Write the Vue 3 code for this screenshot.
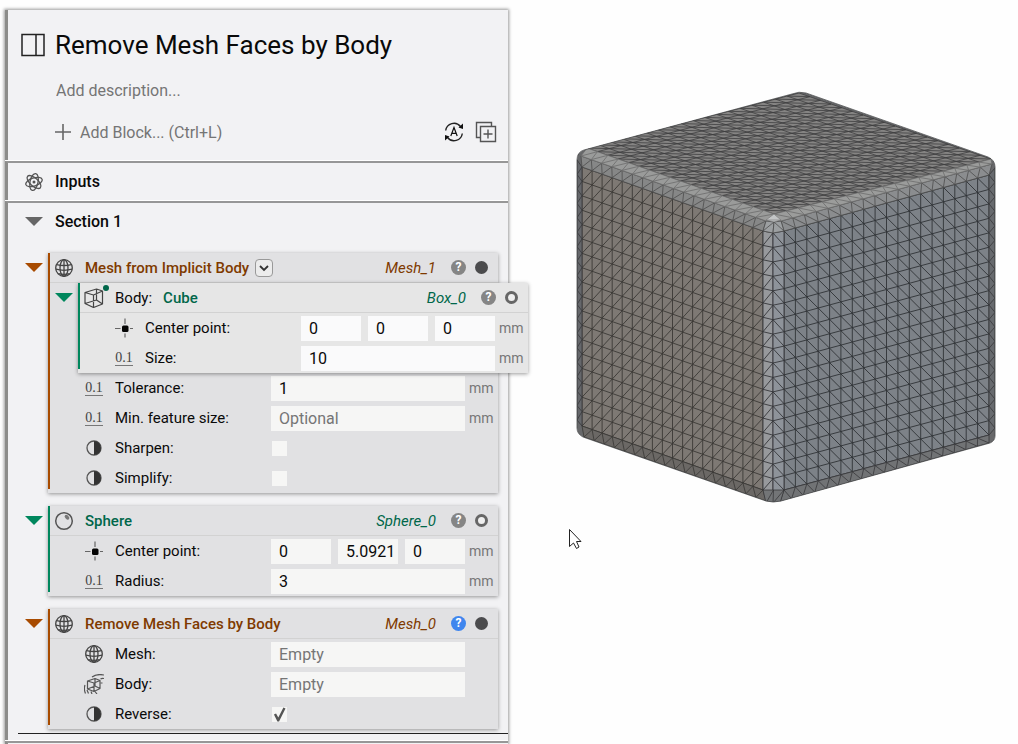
<template>
  <div class="page">

    <!-- ICONS -->
    <svg class="sprite" aria-hidden="true">
      <symbol id="globe" viewBox="0 0 20 20">
        <g fill="none" stroke="#444" stroke-width="1.3">
          <circle cx="10" cy="10" r="8.3" />
          <ellipse cx="10" cy="10" rx="4" ry="8.3" />
          <path d="M10 1.7v16.6M2.7 6.6Q10 8.4 17.3 6.6M1.8 11.2Q10 13.4 18.2 11.2M4.3 15.6Q10 17 15.7 15.6" />
        </g>
      </symbol>
      <symbol id="box" viewBox="0 0 20 20">
        <g fill="none" stroke="#444" stroke-width="1.2" stroke-linejoin="round">
          <path d="M1 4.500 12.500 1l6 2v13l-9 3.500L1 15.500zM1 4.500l8.500 2.500 9-4M9.500 7v12.500M12.500 1v11l6 4M12.500 12 1 15.500" />
        </g>
      </symbol>
      <symbol id="field" viewBox="0 0 20 20">
        <g fill="none" stroke="#555" stroke-width="1.2" stroke-linejoin="round">
          <path d="M3.500 7 11 4.500l5 2v8L10 17.500 3.500 15zM3.500 7 10 9l6-2.500M10 9v8.500M11 4.500V12l5 2.500M11 12l-7.500 3" />
          <path d="M8 3Q13-.5 20 1M1 11Q-.5 15 1.500 19.500M3 16l1.500 3.500M7 17.500l1 2.500M11 17.500l2 2.500M16.500 5Q18 4 20 4.500M16.500 9h2" />
        </g>
      </symbol>
      <symbol id="point" viewBox="0 0 20 20">
        <path d="M1 10.500h18M11 .5v19" stroke="#666" stroke-width="1.2" />
        <rect x="6.500" y="6" width="9.500" height="9.500" fill="#e2e2e3" />
        <rect x="8" y="7.500" width="6.500" height="6.500" rx="1.500" fill="#050505" />
      </symbol>
      <symbol id="half" viewBox="0 0 20 20">
        <circle cx="10" cy="10" r="7" fill="none" stroke="#555" stroke-width="1.300" />
        <path d="M10 3a7 7 0 0 1 0 14z" fill="#333" />
      </symbol>
      <symbol id="sphere" viewBox="0 0 20 20">
        <circle cx="10" cy="10" r="8.300" fill="none" stroke="#555" stroke-width="1.500" />
        <ellipse cx="13" cy="6.200" rx="1.800" ry="2.800" transform="rotate(-45 13 6.200)" fill="#777" />
      </symbol>
      <symbol id="atom" viewBox="0 0 20 20">
        <g fill="none" stroke="#555" stroke-width="1.300">
          <ellipse cx="10" cy="10" rx="4" ry="8.600" transform="rotate(12 10 10)" />
          <ellipse cx="10" cy="10" rx="4" ry="8.600" transform="rotate(72 10 10)" />
          <ellipse cx="10" cy="10" rx="4" ry="8.600" transform="rotate(132 10 10)" />
        </g>
        <circle cx="10" cy="10" r="1.500" fill="#555" />
      </symbol>
    </svg>

    <!-- NOTEBOOK -->
    <main class="panel">

      <section class="part intro">
        <div class="title">
          <svg width="24" height="24" viewBox="0 0 24 24" aria-hidden="true">
            <path d="M1 1.500h22v21H1zM15 1.500v21" fill="none" stroke="#222" stroke-width="1.500" />
          </svg>
          <h1>Remove Mesh Faces by Body</h1>
        </div>

        <input class="description" type="text" placeholder="Add description..." aria-label="Description">

        <div class="tools">
          <button class="add">
            <svg width="16" height="16" viewBox="0 0 16 16" aria-hidden="true">
              <path d="M8 0v16M0 8h16" stroke="#666" stroke-width="1.600" />
            </svg>
            Add Block... (Ctrl+L)
          </button>

          <button class="tool" aria-label="Auto run">
            <svg width="20" height="20" viewBox="0 0 20 20">
              <path d="M1.700 8.500A8.300 8.300 0 0 1 16.500 4.500M18.300 11.500A8.300 8.300 0 0 1 3.500 15.500" fill="none" stroke="#222" stroke-width="1.400" />
              <path d="M14.500 5.500 19 1.500v5.500zM5.500 14.500 1 18.500v-5.500z" fill="#111" />
              <path d="M6.800 14 10 5.500l3.200 8.500M8 11.300h4" fill="none" stroke="#111" stroke-width="1.200" />
            </svg>
          </button>
          <button class="tool" aria-label="Duplicate">
            <svg width="22" height="22" viewBox="0 0 22 22">
              <path d="M5.500 16.500H1.500V1.500h15v4M5.500 5.500h15v15h-15zM13 8.500v9M8.500 13h9" fill="none" stroke="#555" stroke-width="1.400" />
            </svg>
          </button>
        </div>
      </section>

      <section class="part bar">
        <svg class="icon"><use href="#atom" /></svg>
        <h2>Inputs</h2>
      </section>

      <section class="part">
        <div class="section-head">
          <button class="toggle grey" aria-label="Collapse section"></button>
          <h2>Section 1</h2>
        </div>

        <div class="blocks">
          <article v-for="block in blocks" :key="block.id" :class="['block', block.color]">
            <div
              v-for="(group, g) in block.groups"
              :key="g"
              :class="{ nested: group.nested, green: group.nested }"
            >

              <header v-if="group.head" class="head">
                <button class="toggle" :aria-label="'Collapse ' + group.head.name"></button>
                <span class="holder">
                  <svg class="icon"><use :href="'#' + group.head.icon" /></svg>
                  <i v-if="group.nested" class="dot"></i>
                </span>
                <span v-if="group.head.label" class="prefix">{{ group.head.label }}</span>
                <h3>{{ group.head.name }}</h3>
                <button v-if="group.head.overload" class="overload" aria-label="Choose overload">
                  <svg width="16" height="16" viewBox="0 0 16 16">
                    <path d="M4 6l4 4 4-4" fill="none" stroke="#333" stroke-width="1.800" />
                  </svg>
                </button>
                <em>{{ group.head.output }}</em>
                <button :class="['help', { blue: group.head.helpActive }]" aria-label="Help">?</button>
                <span :class="['state', { hollow: group.head.hollow }]"></span>
              </header>

              <div v-for="row in group.rows" :key="row.id" class="row">
                <span v-if="row.icon === 'number'" class="number" aria-hidden="true">0.1</span>
                <svg v-else class="icon"><use :href="'#' + row.icon" /></svg>
                <label :for="row.id">{{ row.label }}</label>

                <input v-if="row.check !== undefined" :id="row.id" v-model="row.check" class="check" type="checkbox">

                <template v-else>
                  <div class="fields">
                    <input
                      v-for="(value, i) in row.values"
                      :id="i ? row.id + i : row.id"
                      :key="i"
                      v-model="row.values[i]"
                      class="field"
                      type="text"
                      :placeholder="row.hint"
                      :aria-label="i ? row.label + ' ' + axes[i] : null"
                    >
                  </div>
                  <span class="unit">{{ row.unit }}</span>
                </template>
              </div>

            </div>
          </article>
        </div>

        <div class="end"></div>
      </section>

      <section class="part rest"></section>
    </main>

    <!-- VIEWPORT -->
    <section class="viewport">
      <svg viewBox="508 0 510 744" role="img" aria-label="Meshed cube">
        <defs>
          <clipPath id="outline"><path :d="outline" /></clipPath>
        </defs>
        <g clip-path="url(#outline)">
          <path :d="outline" fill="#67686a" />
          <g v-for="face in faces" :key="face.name">
            <path :d="fillPath(face)" :fill="face.fill" />
            <path :d="gridPath(face)" :stroke="face.line" :stroke-width="face.weight" fill="none" />
          </g>
        </g>
        <path :d="outline" fill="none" stroke="#4a4b4d" stroke-width="0.800" />
        <path
          d="M569.500 529.500v17l4-3.500 3 5.500 2.500-1.500-2.500-5.500h4.500z"
          fill="#fff"
          stroke="#222"
          stroke-width="1"
        />
      </svg>
    </section>

  </div>
</template>

<script setup>
import { ref } from 'vue'

const axes = ['X', 'Y', 'Z']

/* BLOCKS */
const blocks = ref([
  {
    id: 'mesh1',
    color: 'orange',
    groups: [
      {
        head: { icon: 'globe', name: 'Mesh from Implicit Body', output: 'Mesh_1', overload: true },
        rows: []
      },
      {
        nested: true,
        head: { icon: 'box', label: 'Body:', name: 'Cube', output: 'Box_0', hollow: true },
        rows: [
          { id: 'box-center', icon: 'point', label: 'Center point:', values: ['0', '0', '0'], unit: 'mm' },
          { id: 'box-size', icon: 'number', label: 'Size:', values: ['10'], unit: 'mm' }
        ]
      },
      {
        rows: [
          { id: 'tolerance', icon: 'number', label: 'Tolerance:', values: ['1'], unit: 'mm' },
          { id: 'feature', icon: 'number', label: 'Min. feature size:', values: [''], hint: 'Optional', unit: 'mm' },
          { id: 'sharpen', icon: 'half', label: 'Sharpen:', check: false },
          { id: 'simplify', icon: 'half', label: 'Simplify:', check: false }
        ]
      }
    ]
  },
  {
    id: 'sphere0',
    color: 'green',
    groups: [
      {
        head: { icon: 'sphere', name: 'Sphere', output: 'Sphere_0', hollow: true },
        rows: [
          { id: 'sphere-center', icon: 'point', label: 'Center point:', values: ['0', '5.0921', '0'], unit: 'mm' },
          { id: 'radius', icon: 'number', label: 'Radius:', values: ['3'], unit: 'mm' }
        ]
      }
    ]
  },
  {
    id: 'mesh0',
    color: 'orange',
    groups: [
      {
        head: { icon: 'globe', name: 'Remove Mesh Faces by Body', output: 'Mesh_0', helpActive: true },
        rows: [
          { id: 'mesh', icon: 'globe', label: 'Mesh:', values: [''], hint: 'Empty' },
          { id: 'body', icon: 'field', label: 'Body:', values: [''], hint: 'Empty' },
          { id: 'reverse', icon: 'half', label: 'Reverse:', check: true }
        ]
      }
    ]
  }
])

/* CUBE */
const outline =
  'M792 94Q799 91 806 93L988 157Q995 160 995 167V436Q995 441 990 443L781 501Q773 503 766 501' +
  'L583 437Q577 434 577 428V160Q577 152 584 150Z'

// corners run top-left, top-right, bottom-right, bottom-left
const faces = [
  { name: 'top', corners: [[587, 148], [799, 93], [991, 159], [774, 214]], cols: 18, rows: 18, lean: '\\', fill: '#858483', line: '#3f3f40', weight: 0.8 },
  { name: 'left', corners: [[582, 167], [763, 231], [763, 490], [582, 426]], cols: 18, rows: 18, lean: '/', fill: '#7e7974', line: '#3b3936', weight: 0.9 },
  { name: 'right', corners: [[784, 231], [989, 175], [989, 435], [784, 490]], cols: 18, rows: 18, lean: '\\', fill: '#7d8288', line: '#303337', weight: 0.9 },
  { name: 'left side', corners: [[577, 160], [582, 167], [582, 426], [577, 420]], cols: 1, rows: 18, lean: '/', fill: '#65676b', line: '#38393b', weight: 0.8 },
  { name: 'right side', corners: [[989, 175], [995, 168], [995, 428], [989, 435]], cols: 1, rows: 18, lean: '\\', fill: '#676a6e', line: '#38393b', weight: 0.8 },
  { name: 'front left', corners: [[763, 231], [773, 233], [773, 493], [763, 490]], cols: 1, rows: 18, lean: '/', fill: '#97999c', line: '#36373a', weight: 0.9 },
  { name: 'front right', corners: [[773, 233], [784, 231], [784, 490], [773, 493]], cols: 1, rows: 18, lean: '\\', fill: '#8e939a', line: '#36373a', weight: 0.9 },
  { name: 'left bevel', corners: [[581, 156], [766, 221], [763, 231], [582, 167]], cols: 18, rows: 1, lean: '/', fill: '#868787', line: '#4c4c4c', weight: 0.8 },
  { name: 'left rim', corners: [[587, 148], [774, 214], [766, 221], [581, 156]], cols: 18, rows: 1, lean: '/', fill: '#9a9b9a', line: '#6c6c6c', weight: 0.8 },
  { name: 'right bevel', corners: [[781, 221], [992, 164], [989, 175], [784, 231]], cols: 18, rows: 1, lean: '\\', fill: '#8b8d8f', line: '#4c4c4c', weight: 0.8 },
  { name: 'right rim', corners: [[774, 214], [991, 159], [992, 164], [781, 221]], cols: 18, rows: 1, lean: '\\', fill: '#9b9c9b', line: '#6c6c6c', weight: 0.8 },
  { name: 'front corner left', corners: [[766, 221], [774, 222], [773, 233], [763, 231]], cols: 1, rows: 1, lean: '/', fill: '#9c9fa1', line: '#4c4c4c', weight: 0.8 },
  { name: 'front corner right', corners: [[774, 222], [781, 221], [784, 231], [773, 233]], cols: 1, rows: 1, lean: '\\', fill: '#9c9fa1', line: '#4c4c4c', weight: 0.8 },
  { name: 'front tip', corners: [[774, 214], [781, 220], [774, 222], [766, 220]], cols: 1, rows: 1, lean: '/', fill: '#c3c5c6', line: '#777', weight: 0.6 },
  { name: 'left foot', corners: [[582, 426], [763, 490], [766, 501], [584, 437]], cols: 18, rows: 1, lean: '/', fill: '#6b6865', line: '#383735', weight: 0.8 },
  { name: 'right foot', corners: [[784, 490], [989, 435], [989, 443], [780, 502]], cols: 18, rows: 1, lean: '\\', fill: '#717375', line: '#38393b', weight: 0.8 },
  { name: 'front foot', corners: [[763, 490], [784, 490], [780, 503], [766, 503]], cols: 2, rows: 1, lean: '/', fill: '#737577', line: '#38393b', weight: 0.8 }
]

function at(face, u, v) {
  const [a, b, c, d] = face.corners
  return [0, 1]
    .map(k => (a[k] * (1 - u) + b[k] * u) * (1 - v) + (d[k] * (1 - u) + c[k] * u) * v)
    .map(n => n.toFixed(1))
    .join(' ')
}

function fillPath(face) {
  return 'M' + face.corners.map(p => p.join(' ')).join('L') + 'Z'
}

function gridPath(face) {
  const { cols, rows } = face
  let d = ''

  for (let i = 0; i <= cols; i++) {
    d += `M${at(face, i / cols, 0)}L${at(face, i / cols, 1)}`
  }
  for (let j = 0; j <= rows; j++) {
    d += `M${at(face, 0, j / rows)}L${at(face, 1, j / rows)}`
  }
  for (let i = 0; i < cols; i++) {
    for (let j = 0; j < rows; j++) {
      const [from, to] = face.lean === '/' ? [j + 1, j] : [j, j + 1]
      d += `M${at(face, i / cols, from / rows)}L${at(face, (i + 1) / cols, to / rows)}`
    }
  }
  return d
}
</script>

<style>
body {
  margin: 0;
  background: #fefefe;
}
</style>

<style scoped>
.page {
  display: flex;
  min-height: 100vh;
  box-sizing: border-box;
  padding: 10px 0 0 5px;
  font-family: Roboto, "Liberation Sans", sans-serif;
  font-size: 15px;
  color: #0a0a0a;
  overflow: hidden;
}

.sprite {
  position: absolute;
  width: 0;
  height: 0;
}

h1,
h2,
h3 {
  margin: 0;
  font-weight: 500;
}

button {
  padding: 0;
  border: none;
  background: none;
  font: inherit;
  color: inherit;
  cursor: pointer;
}

input {
  box-sizing: border-box;
  margin: 0;
  border: none;
  outline: none;
  font: inherit;
  color: inherit;
}

input::placeholder {
  color: #757575;
  opacity: 1;
}

.icon {
  display: block;
  flex: none;
  width: 20px;
  height: 20px;
}

.number {
  flex: none;
  width: 18px;
  margin: 0 1px;
  border-bottom: 1px solid #777;
  font-family: "Liberation Serif", serif;
  font-size: 14px;
  line-height: 14px;
  text-align: center;
  color: #444;
}

/* PANEL */
.panel {
  flex: 0 1 503px;
  display: flex;
  flex-direction: column;
  position: relative;
  z-index: 1;
  background: #fff;
  box-shadow: 0 0 3px 1px rgba(0, 0, 0, 0.4);
}

.part {
  border-left: 3px solid #8c8c8a;
  background: #f2f2f4;
}

.part + .part {
  margin-top: 1px;
  border-top: 2px solid #979797;
}

.rest {
  flex: 1;
}

h2 {
  font-size: 16px;
}

/* INTRO */
.intro {
  height: 150px;
  box-sizing: border-box;
  padding: 16px 11px 0 13px;
}

.title {
  display: flex;
  align-items: center;
  gap: 10px;
  height: 38px;
}

h1 {
  font-size: 26px;
  font-weight: 400;
}

.description {
  display: block;
  width: 80%;
  height: 24px;
  margin: 14px 0 0 35px;
  padding: 0;
  background: none;
  font-size: 16px;
}

.tools {
  display: flex;
  align-items: center;
  gap: 11px;
  height: 24px;
  margin: 18px 0 0 34px;
}

.add {
  display: flex;
  align-items: center;
  gap: 9px;
  margin-right: auto;
  font-size: 16px;
  color: #757575;
}

.tool svg {
  display: block;
}

.bar,
.section-head {
  display: flex;
  align-items: center;
  height: 37px;
}

.bar {
  gap: 11px;
  padding-left: 16px;
}

.section-head {
  gap: 12px;
  padding-left: 17px;
}

/* BLOCKS */
.orange {
  --bar: #a84b00;
  --text: #7f3a00;
}

.green {
  --bar: #00875d;
  --text: #00674a;
}

.blocks {
  display: flex;
  flex-direction: column;
  gap: 13px;
  padding: 13px 10px 0 40px;
}

.block,
.nested {
  position: relative;
  padding-left: 2px;
  background: #e1e1e3;
  box-shadow: 0 1px 4px rgba(0, 0, 0, 0.4);
}

.block::before,
.nested::before {
  content: '';
  position: absolute;
  top: 0;
  bottom: 4px;
  left: 0;
  width: 2px;
  background: var(--bar);
}

.nested {
  z-index: 1;
  margin: 0 -30px 0 28px;
  background: #e6e6e6;
}

.head {
  display: flex;
  align-items: center;
  height: 30px;
  box-sizing: border-box;
  padding-right: 10px;
  border-bottom: 1px solid #d2d2d2;
}

.toggle {
  width: 18px;
  height: 9px;
  background: var(--bar);
  clip-path: polygon(0 0, 100% 0, 50% 100%);
}

.head .toggle {
  margin: 0 11px 0 -25px;
}

.toggle.grey {
  background: #666;
}

.holder {
  position: relative;
  margin-right: 11px;
}

.dot {
  position: absolute;
  top: -3px;
  right: -5px;
  width: 6px;
  height: 6px;
  border-radius: 50%;
  background: #00674a;
}

.prefix {
  margin-right: 11px;
}

h3 {
  font-size: 15px;
  color: var(--text);
}

.overload {
  margin-left: 6px;
  border: 1px solid #999;
  border-radius: 4px;
  background: #ececec;
}

.overload svg {
  display: block;
}

em {
  margin: 0 15px 0 auto;
  color: var(--text);
}

.help {
  width: 15px;
  height: 15px;
  border-radius: 50%;
  background: #858585;
  color: #fff;
  font-size: 12px;
  font-weight: 700;
  line-height: 15px;
}

.help.blue {
  background: #3f86ee;
}

.state {
  width: 13px;
  height: 13px;
  box-sizing: border-box;
  margin-left: 9px;
  border-radius: 50%;
  background: #4b4b4d;
}

.state.hollow {
  border: 3px solid #666;
  background: #efefef;
}

/* ROWS */
.row {
  display: flex;
  align-items: center;
  height: 30px;
  padding-left: 34px;
}

.row label {
  flex: none;
  width: 156px;
  margin-left: 11px;
}

.number + label {
  margin-left: 11px;
}

.fields {
  flex: 1;
  display: flex;
  gap: 7px;
}

.field {
  flex: 1;
  min-width: 0;
  width: 0;
  height: 25px;
  padding: 0 0 0 8px;
  background: #f6f6f5;
  font-size: 16px;
}

.nested .field {
  background: #fafafb;
}

.unit {
  flex: none;
  width: 29px;
  margin-left: 4px;
  font-size: 14px;
  color: #777;
}

.check {
  appearance: none;
  width: 15px;
  height: 15px;
  margin-left: 1px;
  background: #f6f6f5;
}

.check:checked::after {
  content: '';
  display: block;
  width: 15px;
  height: 15px;
  background: #555;
  clip-path: polygon(13% 53%, 27% 47%, 42% 73%, 76% 7%, 90% 13%, 47% 100%, 36% 100%);
}

.end {
  height: 1px;
  margin: 4px 0 6px 10px;
  background: #222;
}

/* VIEWPORT */
.viewport {
  flex: 1;
  min-width: 0;
  margin-top: -10px;
}

.viewport svg {
  display: block;
  width: 100%;
  height: auto;
}
</style>
